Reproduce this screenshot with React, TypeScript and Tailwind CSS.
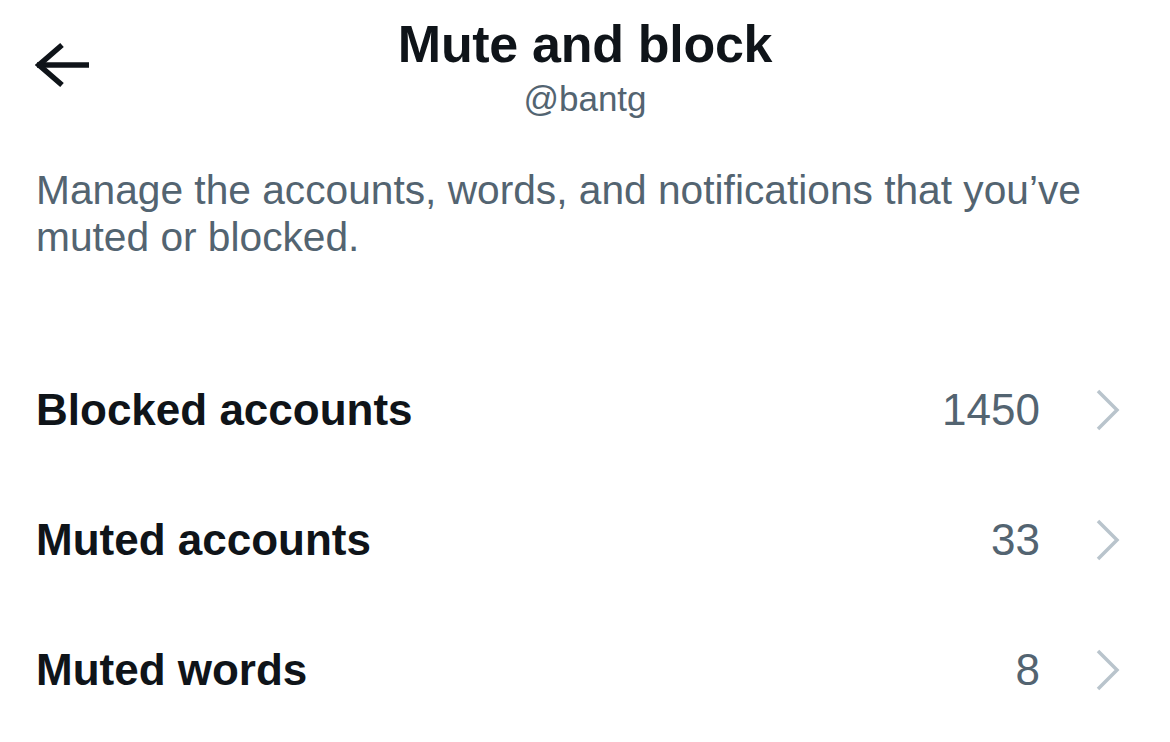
import React from 'react';

const rows = [
  { label: 'Blocked accounts', count: '1450' },
  { label: 'Muted accounts', count: '33' },
  { label: 'Muted words', count: '8' },
];

const BackArrow = () => (
  <svg width="56" height="48" viewBox="0 0 56 48" fill="none">
    <path d="M2 24H54" stroke="#0f1419" strokeWidth="5.5" />
    <path d="M27 4L4 24L27 44" stroke="#0f1419" strokeWidth="5.5" strokeLinejoin="miter" />
  </svg>
);

const Chevron = () => (
  <svg width="24" height="42" viewBox="0 0 24 42" fill="none">
    <path d="M2 2L21 21L2 40" stroke="#b9c4cc" strokeWidth="3.5" />
  </svg>
);

export default function App() {
  return (
    <div className="w-[1170px] h-[742px] bg-white overflow-hidden font-['Liberation_Sans',Arial,sans-serif]">
      {/* Header */}
      <div className="grid grid-cols-[1fr_auto_1fr] pt-[18px]">
        <div className="pl-[35px] pt-[23px]">
          <BackArrow />
        </div>
        <div className="flex flex-col items-center">
          <h1 className="text-[52px] leading-[52px] font-bold text-[#0f1419] tracking-[-0.3px]">Mute and block</h1>
          <div className="mt-[11px] text-[35px] leading-[35px] text-[#536471]">@bantg</div>
        </div>
        <div />
      </div>

      {/* Description */}
      <p className="mt-[51px] pl-[36px] pr-[50px] text-[40.7px] leading-[47px] text-[#536471]">
        Manage the accounts, words, and notifications that you’ve muted or blocked.
      </p>

      {/* Rows */}
      <div className="mt-[84px]">
        {rows.map((r) => (
          <div key={r.label} className="flex items-center justify-between h-[130px] pl-[36px] pr-[50px]">
            <span className="text-[44px] leading-[44px] font-bold text-[#0f1419]">{r.label}</span>
            <div className="flex items-center gap-[56px]">
              <span className="text-[44px] leading-[44px] text-[#536471]">{r.count}</span>
              <Chevron />
            </div>
          </div>
        ))}
      </div>
    </div>
  );
}
